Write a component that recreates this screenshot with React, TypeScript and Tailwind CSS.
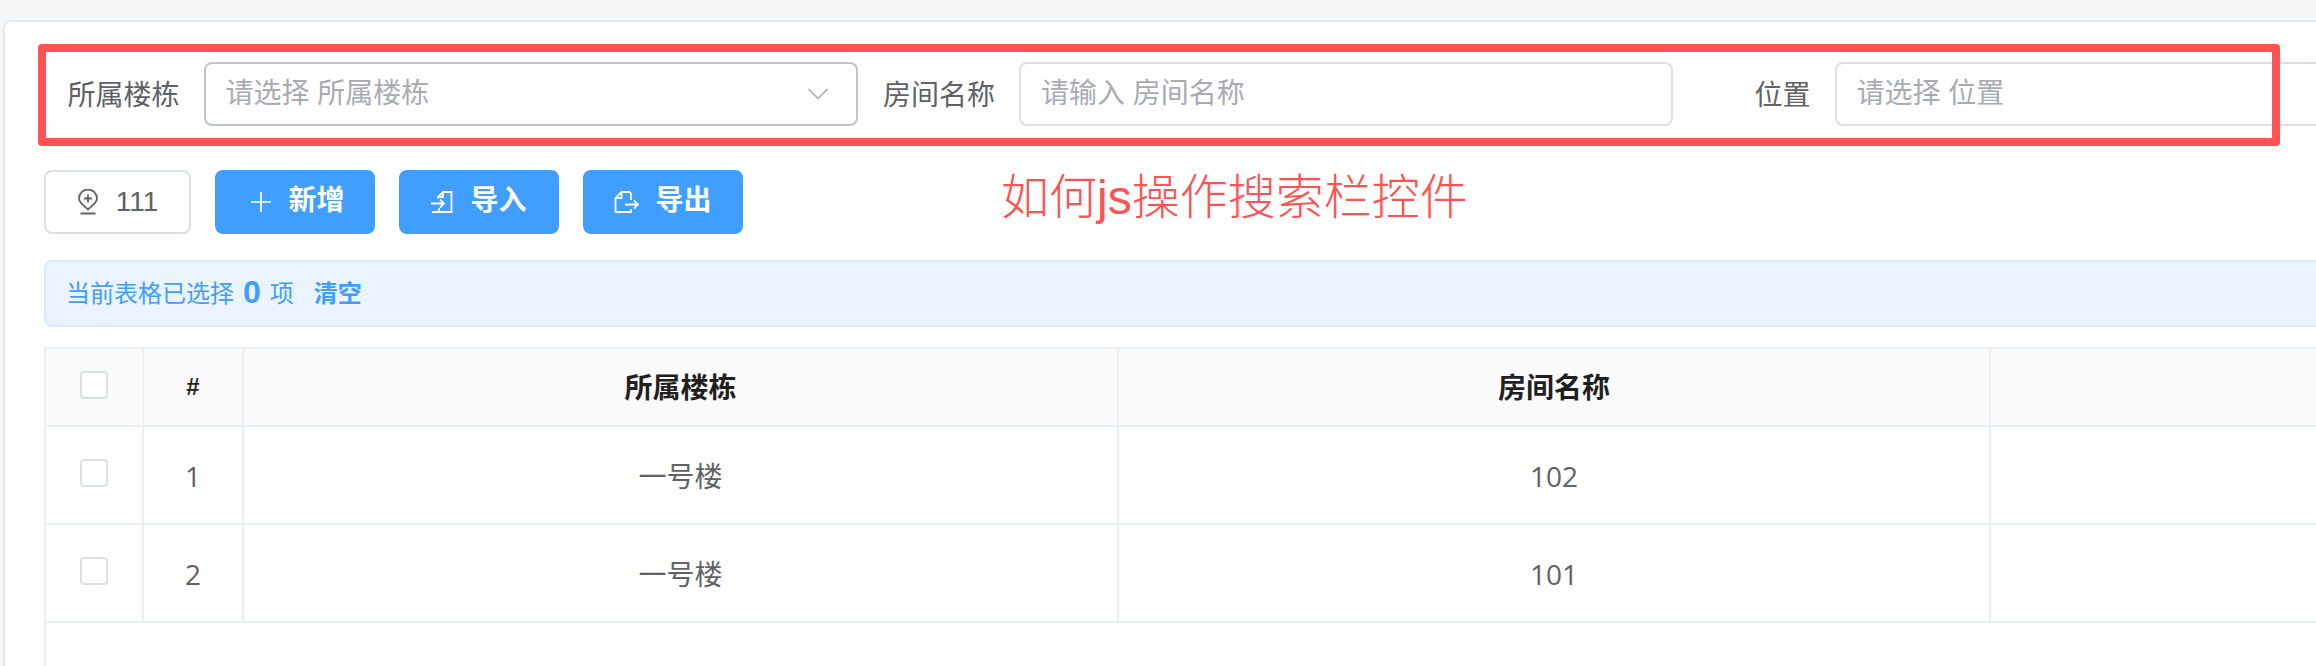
import { Plus, ChevronDown } from 'lucide-react'

const COLS = [98, 100, 875, 872, 722, 400]

const ROWS = [
  { no: 1, building: '一号楼', room: '102', place: '一楼' },
  { no: 2, building: '一号楼', room: '101', place: '' },
]

function LocationIcon() {
  return (
    <svg width="22" height="26" viewBox="0 0 22 26" fill="none" stroke="#606266" strokeWidth="1.800">
      <path d="M11 20.500C6 16 2 13.500 2 9.500a9 9 0 0 1 18 0c0 4-4 6.500-9 11z" />
      <path d="M3.500 24.500h15M11 5.500v8M7 9.500h8" />
    </svg>
  )
}

function ImportIcon() {
  return (
    <svg width="22" height="22" viewBox="0 0 22 22" fill="none" stroke="#fff" strokeWidth="1.800">
      <path d="M7 7.500V6l5-5h8.500v20H8v-4" />
      <path d="M12 1v5H7M0 12.500h13M9 8.500l4 4-4 4M1 21h7" />
    </svg>
  )
}

function ExportIcon() {
  return (
    <svg width="25" height="22" viewBox="0 0 25 22" fill="none" stroke="#fff" strokeWidth="1.800">
      <path d="M1.500 21V7l6-6h8l1.500 1.500V9M17 18v3H1.500" />
      <path d="M7.500 1v6h-6M11 13.500h13M20 9.500l4 4-4 4" />
    </svg>
  )
}

function Checkbox() {
  return <span className="block w-[28px] h-[28px] bg-white border-2 border-[#dcdfe6] rounded-[4px] ml-[34px] -mt-[4px]" />
}

function SearchItem({ label, placeholder, select }: { label: string; placeholder: string; select?: boolean }) {
  return (
    <div className="flex items-center w-[815.5px] shrink-0">
      <label className="w-[136px] shrink-0 pr-[24px] pt-[3px] text-right text-[28px] text-[#606266]">{label}</label>
      <div className={`relative w-[654px] h-[64px] rounded-[8px] border-2 bg-white ${select ? 'border-[#c0c4cc]' : 'border-[#dcdfe6]'}`}>
        <input
          readOnly
          placeholder={placeholder}
          className="w-full h-full px-[20px] text-[28px] outline-none bg-transparent placeholder:text-[#a8abb2]"
        />
        {select && <ChevronDown className="absolute right-[20px] top-[12px] text-[#a8abb2]" size={36} strokeWidth={1.1} />}
      </div>
    </div>
  )
}

function BlueButton({ icon, text, gap }: { icon: React.ReactNode; text: string; gap: string }) {
  return (
    <button className={`flex items-center justify-center ${gap} w-[160px] h-[64px] rounded-[8px] bg-[#409eff] text-white text-[28px] font-semibold`}>
      {icon}
      <span className="-mt-[2px]">{text}</span>
    </button>
  )
}

export default function App() {
  return (
    <div className="relative w-[2316px] h-[666px] overflow-hidden bg-[#f5f6f8] pt-[20px] pl-[3px] font-['Liberation_Sans','Noto_Sans_CJK_SC',sans-serif]">
      <div className="w-[2600px] h-[700px] bg-white border-2 border-[#e4e7ed] rounded-[8px] pt-[40px] pl-[39px]">
        <div className="flex pl-[23.500px]">
          <SearchItem label="所属楼栋" placeholder="请选择 所属楼栋" select />
          <SearchItem label="房间名称" placeholder="请输入 房间名称" />
          <SearchItem label="位置" placeholder="请选择 位置" />
        </div>

        <div className="flex gap-[24px] mt-[44px]">
          <button className="flex items-center justify-center gap-[17px] w-[147px] h-[64px] rounded-[8px] border-2 border-[#dcdfe6] text-[28px] text-[#606266]">
            <LocationIcon />
            <span>111</span>
          </button>
          <BlueButton icon={<Plus size={32} strokeWidth={1.300} />} text="新增" gap="gap-[11px]" />
          <BlueButton icon={<ImportIcon />} text="导入" gap="gap-[17px]" />
          <BlueButton icon={<ExportIcon />} text="导出" gap="gap-[16px]" />
        </div>

        <div className="flex items-center h-[67px] mt-[26px] pl-[20px] rounded-[8px] border-2 border-[#d9ecff] bg-[#ebf3fe] text-[24px] text-[#409eff]">
          <span>当前表格已选择</span>
          <span className="mx-[9px] text-[32px] font-bold leading-none -mt-[4px]">0</span>
          <span>项</span>
          <span className="ml-[20px] font-bold">清空</span>
        </div>

        <div className="mt-[20px] h-[400px] border-l-2 border-t-2 border-[#ebeef5]">
          <table className="w-[3067px] table-fixed border-separate border-spacing-0">
            <colgroup>
              {COLS.map((w, i) => (
                <col key={i} style={{ width: w }} />
              ))}
            </colgroup>
            <thead>
              <tr className="h-[78px] bg-[#fafafa] text-[#1f1f1f]">
                <th className="border-r-2 border-b-2 border-[#ebeef5]"><Checkbox /></th>
                <th className="border-r-2 border-b-2 border-[#ebeef5] text-[24px] font-bold">#</th>
                <th className="border-r-2 border-b-2 border-[#ebeef5] pt-[3px] text-[28px] font-bold">所属楼栋</th>
                <th className="border-r-2 border-b-2 border-[#ebeef5] pt-[3px] text-[28px] font-bold">房间名称</th>
                <th className="border-r-2 border-b-2 border-[#ebeef5]" />
                <th className="border-b-2 border-[#ebeef5]" />
              </tr>
            </thead>
            <tbody>
              {ROWS.map((row) => (
                <tr key={row.no} className="h-[98px] text-[28px] text-[#606266] text-center font-['Open_Sans','Noto_Sans_CJK_SC',sans-serif]">
                  <td className="border-r-2 border-b-2 border-[#ebeef5]"><Checkbox /></td>
                  <td className="border-r-2 border-b-2 border-[#ebeef5] pt-[1px]">{row.no}</td>
                  <td className="border-r-2 border-b-2 border-[#ebeef5] pt-[1px]">{row.building}</td>
                  <td className="border-r-2 border-b-2 border-[#ebeef5] pt-[1px]">{row.room}</td>
                  <td className="border-r-2 border-b-2 border-[#ebeef5] pt-[1px]">{row.place}</td>
                  <td className="border-b-2 border-[#ebeef5]" />
                </tr>
              ))}
            </tbody>
          </table>
        </div>
      </div>

      {/* red annotation drawn on top of the screenshot */}
      <div className="absolute left-[1001px] top-[162px] text-[48px] text-[#ff5252] font-light whitespace-nowrap">如何js操作搜索栏控件</div>
      <div className="absolute left-[38px] top-[44px] w-[2242px] h-[102px] border-[8px] border-[#ff5252] rounded-[4px]" />
    </div>
  )
}
